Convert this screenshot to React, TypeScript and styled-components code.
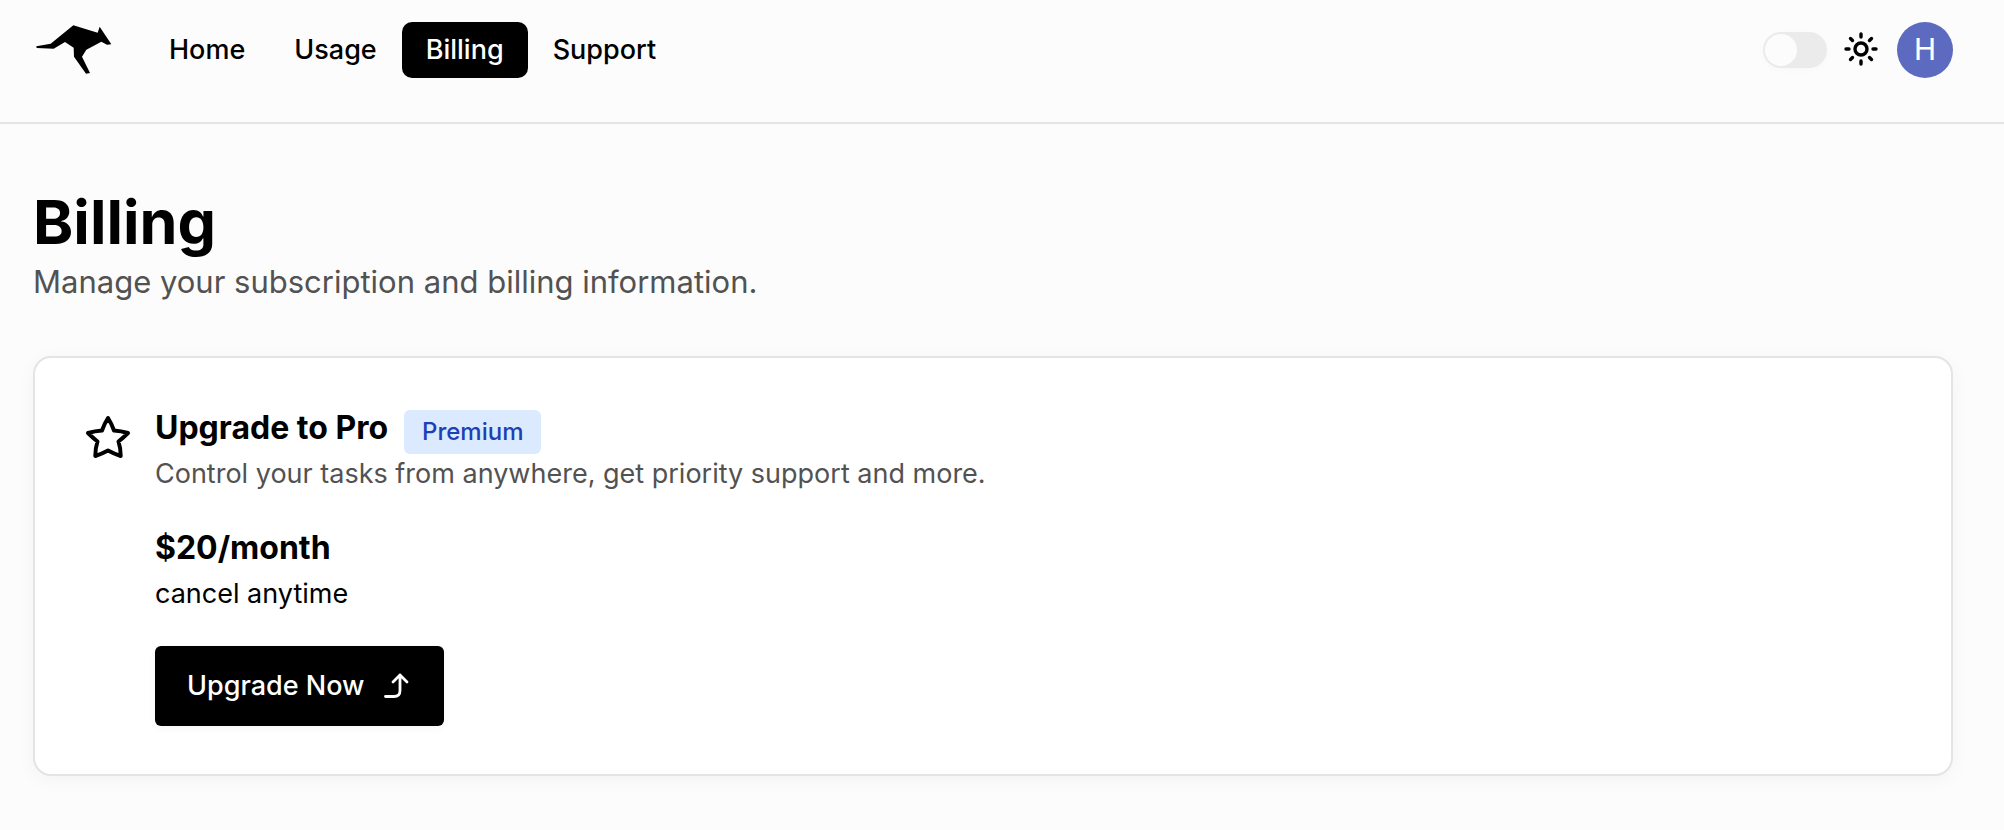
import React from "react";
import styled, { createGlobalStyle } from "styled-components";

const GlobalStyle = createGlobalStyle`
  *, *::before, *::after { box-sizing: border-box; }
  body {
    margin: 0;
    background: #fcfcfc;
    color: #000;
    font-family: Inter, "Liberation Sans", sans-serif;
  }
  h1, h2, p { margin: 0; }
`;

const Header = styled.header`
  display: flex;
  align-items: center;
  justify-content: space-between;
  padding: 22px 51px 44px 36px;
  border-bottom: 2px solid #e4e4e4;
`;

const HeaderGroup = styled.div<{ $gap: number }>`
  display: flex;
  align-items: center;
  gap: ${({ $gap }) => $gap}px;
`;

const LogoLink = styled.a`
  display: flex;
  color: #000;
`;

const Nav = styled.nav`
  display: flex;
  gap: 1px;
`;

const NavLink = styled.a<{ $active?: boolean }>`
  padding: 10px 24px;
  border-radius: 10px;
  background: ${({ $active }) => ($active ? "#000" : "transparent")};
  color: ${({ $active }) => ($active ? "#fff" : "#000")};
  font-size: 27px;
  font-weight: 500;
  line-height: 36px;
  text-decoration: none;
`;

const Switch = styled.input`
  appearance: none;
  display: flex;
  align-items: center;
  width: 64px;
  height: 36px;
  margin: 0;
  padding: 2px;
  border-radius: 18px;
  background: #ebebeb;
  box-shadow: 0 2px 8px rgba(0, 0, 0, 0.02);

  &::before {
    content: "";
    width: 32px;
    height: 32px;
    border-radius: 50%;
    background: #fcfcfc;
  }

  &:checked {
    justify-content: flex-end;
  }
`;

const IconButton = styled.button`
  display: flex;
  padding: 0;
  border: 0;
  background: none;
  color: #000;
`;

const Avatar = styled.button`
  width: 56px;
  height: 56px;
  padding: 0;
  border: 0;
  border-radius: 50%;
  background: #5c6bc0;
  color: #fff;
  font: 400 31px/56px Roboto, sans-serif;
`;

const Main = styled.main`
  padding: 66px 51px 55px 33px;
`;

const PageTitle = styled.h1`
  font-size: 61px;
  font-weight: 700;
  line-height: 64px;
`;

const PageIntro = styled.p`
  margin-top: 8px;
  color: #525252;
  font-size: 31px;
  line-height: 40px;
`;

const Card = styled.section`
  display: flex;
  align-items: flex-start;
  gap: 24px;
  margin-top: 54px;
  padding: 48px;
  border: 2px solid #e4e4e4;
  border-radius: 18px;
  background: #fff;
  box-shadow: 0 4px 20px rgba(0, 0, 0, 0.04);
`;

const CardIcon = styled.div`
  display: flex;
  padding-top: 8px;
`;

const CardBody = styled.div`
  display: flex;
  flex: 1;
  flex-direction: column;
  align-items: flex-start;
`;

const CardHeading = styled.div`
  display: flex;
  align-items: flex-start;
  gap: 16px;
`;

const Strong = styled.h2`
  font-size: 32px;
  font-weight: 700;
  line-height: 44px;
`;

const Pricing = styled.div`
  display: flex;
  flex-direction: column;
  gap: 4px;
  margin: 32px 0;
`;

const Badge = styled.span`
  margin-top: 4px;
  padding: 6px 18px;
  border-radius: 6px;
  background: #dbeafe;
  color: #1d40b5;
  font-size: 24px;
  font-weight: 500;
  line-height: 32px;
`;

const Text = styled.p<{ $muted?: boolean }>`
  color: ${({ $muted }) => ($muted ? "#525252" : "#000")};
  font-size: 27px;
  line-height: 40px;
`;

const UpgradeButton = styled.button`
  display: flex;
  align-items: center;
  gap: 16px;
  padding: 20px 32px;
  border: 0;
  border-radius: 6px;
  background: #000;
  color: #fff;
  font: 500 27px/40px Inter, sans-serif;
  box-shadow: 0 2px 8px rgba(0, 0, 0, 0.04);
`;

const KangarooLogo = () => (
  <svg width="76" height="49" viewBox="48 78 228 147" overflow="visible" fill="currentColor" aria-hidden="true">
    <path d="M49 139 L92 131 L160 76 L233 98 L239 80 L274 133 L261 134 L244 125 L199 149 L186 170 L210 219 L198 221 L162 170 L161 143 L135 126 L101 146 L50 144 Z" />
  </svg>
);

const SunIcon = () => (
  <svg width="38" height="36" viewBox="0 1 38 36" fill="none" stroke="currentColor" strokeWidth="3.4" strokeLinecap="round" aria-hidden="true">
    <circle cx="18" cy="18" r="6" />
    <path d="M18 3v3M18 30v3M3 18h3M30 18h3M7.5 7.5l2 2M26.5 26.5l2 2M7.5 28.5l2-2M26.5 9.5l2-2" />
  </svg>
);

const StarIcon = () => (
  <svg width="48" height="48" viewBox="0 0 48 48" fill="none" stroke="currentColor" strokeWidth="4" strokeLinecap="round" strokeLinejoin="round" aria-hidden="true">
    <path d="M25 4 Q28.5 9.5 31 16.5 Q38 17 45 19 Q40.5 23.5 35.5 27.5 Q37.8 34.5 37.7 42 Q31 39.8 25 36.5 Q19 39.8 12.3 42 Q12.2 34.5 14.5 27.5 Q9.5 23.5 5 19 Q12 17 19 16.5 Q21.5 9.5 25 4 Z" />
  </svg>
);

const ArrowIcon = () => (
  <svg width="32" height="32" viewBox="0 0 32 32" fill="none" stroke="currentColor" strokeWidth="2.8" strokeLinecap="round" strokeLinejoin="round" aria-hidden="true">
    <path d="M5.5 26.5h8.5q6 0 6-6V5M13 12l7-7 7 7" />
  </svg>
);

export default function App() {
  return (
    <>
      <GlobalStyle />
      <Header>
        <HeaderGroup $gap={33}>
          <LogoLink href="#home" aria-label="Home page">
            <KangarooLogo />
          </LogoLink>
          <Nav>
            <NavLink href="#home">Home</NavLink>
            <NavLink href="#usage">Usage</NavLink>
            <NavLink href="#billing" $active aria-current="page">Billing</NavLink>
            <NavLink href="#support">Support</NavLink>
          </Nav>
        </HeaderGroup>
        <HeaderGroup $gap={16}>
          <Switch type="checkbox" role="switch" aria-label="Dark mode" />
          <IconButton type="button" aria-label="Light theme">
            <SunIcon />
          </IconButton>
          <Avatar type="button">H</Avatar>
        </HeaderGroup>
      </Header>
      <Main>
        <PageTitle>Billing</PageTitle>
        <PageIntro>Manage your subscription and billing information.</PageIntro>
        <Card>
          <CardIcon>
            <StarIcon />
          </CardIcon>
          <CardBody>
            <CardHeading>
              <Strong>Upgrade to Pro</Strong>
              <Badge>Premium</Badge>
            </CardHeading>
            <Text $muted>Control your tasks from anywhere, get priority support and more.</Text>
            <Pricing>
              <Strong as="p">$20/month</Strong>
              <Text>cancel anytime</Text>
            </Pricing>
            <UpgradeButton type="button">
              Upgrade Now
              <ArrowIcon />
            </UpgradeButton>
          </CardBody>
        </Card>
      </Main>
    </>
  );
}
